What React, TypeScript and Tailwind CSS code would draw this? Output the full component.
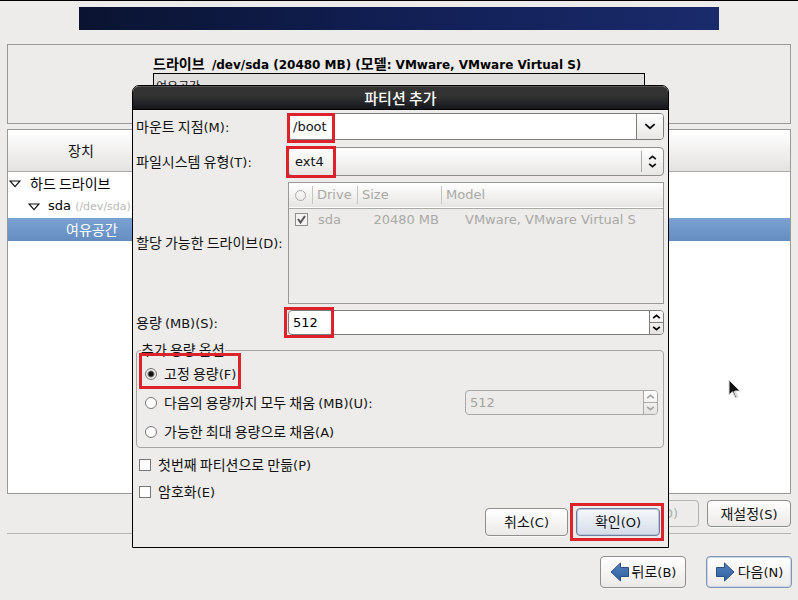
import React, { useState } from "react";
import type { ReactNode } from "react";

const button =
  "flex items-center justify-center rounded-[4px] border border-[#8f8f8c] bg-linear-to-b from-white to-[#eceae8] shadow-[0_1px_0_#f8f8f7]";

/* Korean text followed by its Latin part, such as a keyboard mnemonic. */
function Mixed({ ko, en }: { ko: string; en?: string }) {
  return (
    <span className="whitespace-pre">
      <span className="font-['Noto_Sans_CJK_KR',sans-serif] text-[14px] leading-[20px]">{ko}</span>
      {en}
    </span>
  );
}

function Chevron({ up = false, large = false }: { up?: boolean; large?: boolean }) {
  return (
    <svg width={large ? 12 : 9} height={large ? 7 : 5} viewBox="0 0 10 6" fill="none" stroke="currentColor" strokeWidth={large ? 1.6 : 2} aria-hidden="true">
      <path d={up ? "M1 5 5 1.5 9 5" : "M1 1 5 4.5 9 1"} />
    </svg>
  );
}

function Expander() {
  return (
    <svg width="12" height="8" viewBox="0 0 12 8" fill="white" stroke="#111" strokeWidth="1.2" aria-hidden="true">
      <path d="M1 1h10L6 6.6Z" />
    </svg>
  );
}

function Arrow({ right = false }: { right?: boolean }) {
  return (
    <svg width="20" height="20" viewBox="0 0 20 20" aria-hidden="true" className={right ? "-scale-x-100" : ""}>
      <defs>
        <linearGradient id={right ? "next" : "back"} x1="0" y1="0" x2="0" y2="1">
          <stop offset="0" stopColor="#5583bd" />
          <stop offset="1" stopColor="#2f5f9f" />
        </linearGradient>
      </defs>
      <path
        d="M1 10 10.5 1v4.500H18.500v9H10.500V19Z"
        fill={right ? "url(#next)" : "url(#back)"}
        stroke="#294f82"
        strokeLinejoin="round"
      />
    </svg>
  );
}

function Highlight({ className }: { className: string }) {
  return <span className={`pointer-events-none absolute border-3 border-[#dc232c] ${className}`} />;
}

function Spin({ id, label, value, onChange, disabled = false }: { id: string; label?: string; value: string; onChange?: (v: string) => void; disabled?: boolean }) {
  const line = disabled ? "border-[#a9a9a6]" : "border-[#7c7c79]";
  return (
    <div className={`flex h-[25px] w-full overflow-hidden rounded-[4px] border ${line} ${disabled ? "bg-[#ecebe9] text-[#a4a4a1]" : "bg-white text-black"}`}>
      <input
        id={id}
        aria-label={label}
        value={value}
        disabled={disabled}
        onChange={(e) => onChange?.(e.target.value)}
        className="w-0 min-w-0 grow bg-transparent px-1 outline-none"
      />
      <div className={`flex w-[14px] flex-col border-l ${line} bg-linear-to-b from-white to-[#e4e3e1]`}>
        <button disabled={disabled} aria-label="증가" className={`flex grow items-center justify-center border-b ${line}`}>
          <Chevron up />
        </button>
        <button disabled={disabled} aria-label="감소" className="flex grow items-center justify-center">
          <Chevron />
        </button>
      </div>
    </div>
  );
}

function Radio({ id, checked, onSelect, children }: { id: string; checked: boolean; onSelect: () => void; children: ReactNode }) {
  return (
    <label htmlFor={id} className="flex items-center gap-[7px]">
      <input
        id={id}
        type="radio"
        name="extra-size"
        checked={checked}
        onChange={onSelect}
        className="size-3 appearance-none rounded-full border border-[#777] bg-white checked:bg-[radial-gradient(circle,#111_0_2px,#eee_4px)]"
      />
      {children}
    </label>
  );
}

function Check({ id, children }: { id: string; children: ReactNode }) {
  return (
    <label htmlFor={id} className="flex h-[27px] items-center gap-[7px] pl-[3px]">
      <input id={id} type="checkbox" className="size-3 appearance-none border border-[#777] bg-white checked:bg-[#555]" />
      {children}
    </label>
  );
}

function AddPartition() {
  const [mount, setMount] = useState("/boot");
  const [size, setSize] = useState("512");
  const [mode, setMode] = useState("fixed");
  return (
    <div role="dialog" aria-labelledby="dialog-title" className="absolute top-[84px] right-[129px] left-[132px] rounded-t-[7px] border border-black bg-[#edecea]">
      <h1 id="dialog-title" className="flex h-6 items-center justify-center rounded-t-[6px] border-t border-b border-t-[#555] border-b-black bg-linear-to-b from-[#333] from-40% to-[#14171b] font-['Noto_Sans_CJK_KR',sans-serif] text-[15px] leading-[20px] font-medium text-white">
        파티션 추가
      </h1>
      <div className="pt-[3px] pr-1 pb-[11px] pl-[3px]">
        <div className="grid grid-cols-[152px_1fr] items-center">
          <label htmlFor="mount"><Mixed ko="마운트 지점" en="(M):" /></label>
          <div className="relative flex h-[27px] rounded-[4px] border border-[#7c7c79] bg-white">
            <input id="mount" value={mount} onChange={(e) => setMount(e.target.value)} className="w-0 min-w-0 grow bg-transparent px-1 outline-none" />
            <button aria-label="목록 열기" className="flex w-[27px] items-center justify-center rounded-r-[3px] border-l border-[#7c7c79] bg-linear-to-b from-white to-[#e8e7e5]">
              <Chevron large />
            </button>
            <Highlight className="-top-px -left-[2px] h-[30px] w-12" />
          </div>

          <label htmlFor="fs" className="mt-[7px]"><Mixed ko="파일시스템 유형" en="(T):" /></label>
          <div className="relative mt-[7px]">
            <select id="fs" className="block h-[29px] w-full appearance-none rounded-[4px] border border-[#8f8f8c] bg-linear-to-b from-white to-[#e8e7e5] px-[6px] outline-none">
              <option>ext4</option>
            </select>
            <span className="pointer-events-none absolute inset-y-1 right-0 flex w-[23px] flex-col items-center justify-center gap-[3px] border-l border-[#aaa] pr-[2px]">
              <Chevron up />
              <Chevron />
            </span>
            <Highlight className="-top-px -left-[2px] h-8 w-[50px]" />
          </div>

          <span id="drives" className="mt-[6px]"><Mixed ko="할당 가능한 드라이브" en="(D):" /></span>
          <div className="mt-[6px] h-[122px] border border-[#999996] text-[#a9a9a6]">
            <table aria-labelledby="drives" className="w-full table-fixed border-collapse text-left">
              <colgroup>
                <col className="w-[24px]" />
                <col className="w-[45px]" />
                <col className="w-[84px]" />
                <col />
              </colgroup>
              <thead>
                <tr className="h-[25px] border-b border-[#a9a9a6] bg-linear-to-b from-white to-[#e6e5e3]">
                  <th className="p-0 font-normal">
                    <div className="flex h-[18px] items-center justify-center border-r border-[#c4c4c1]">
                      <span className="size-[11px] rounded-full border border-[#a9a9a6]" />
                    </div>
                  </th>
                  <th className="p-0 font-normal"><div className="h-[18px] border-r border-[#c4c4c1] pl-1 leading-[18px]">Drive</div></th>
                  <th className="p-0 font-normal"><div className="h-[18px] border-r border-[#c4c4c1] pl-1 leading-[18px]">Size</div></th>
                  <th className="p-0 pl-1 font-normal">Model</th>
                </tr>
              </thead>
              <tbody>
                <tr className="h-[23px]">
                  <td className="p-0">
                    <span className="relative ml-[6px] block size-[13px]">
                      <input type="checkbox" aria-label="sda" defaultChecked disabled className="block size-[13px] appearance-none border border-[#8f8f8c] bg-[#f4f3f2]" />
                      <svg className="pointer-events-none absolute inset-0" width="13" height="13" viewBox="0 0 13 13" fill="none" stroke="#555" strokeWidth="2" aria-hidden="true">
                        <path d="m3 6 2.500 3.500L10 3" />
                      </svg>
                    </span>
                  </td>
                  <td className="p-0 pl-[5px]">sda</td>
                  <td className="p-0 pr-[3px] text-right whitespace-nowrap">20480 MB</td>
                  <td className="p-0 pl-[23px] whitespace-nowrap">VMware, VMware Virtual S</td>
                </tr>
              </tbody>
            </table>
          </div>

          <label htmlFor="size" className="mt-[6px]"><Mixed ko="용량 " en="(MB)(S):" /></label>
          <div className="relative mt-[6px]">
            <Spin id="size" value={size} onChange={setSize} />
            <Highlight className="-top-[3px] -left-1 h-[31px] w-[50px]" />
          </div>
        </div>

        <fieldset className="mt-[7px] rounded-[4px] border border-[#a5a5a2] py-px pr-[5px] pl-2">
          <legend className="-ml-1 h-4 font-['Noto_Sans_CJK_KR',sans-serif] text-[14px] leading-[14px]">추가 용량 옵션</legend>
          <div className="relative flex h-[29px] items-center">
            <Radio id="fixed" checked={mode === "fixed"} onSelect={() => setMode("fixed")}><Mixed ko="고정 용량" en="(F)" /></Radio>
            <Highlight className="-top-[6px] -left-[6px] h-9 w-[102px]" />
          </div>
          <div className="flex h-[29px] items-center justify-between">
            <Radio id="upto" checked={mode === "upto"} onSelect={() => setMode("upto")}><Mixed ko="다음의 용량까지 모두 채움 " en="(MB)(U):" /></Radio>
            <div className="w-[193px]"><Spin id="upto-size" label="용량 (MB)" value="512" disabled /></div>
          </div>
          <div className="flex h-[29px] items-center">
            <Radio id="max" checked={mode === "max"} onSelect={() => setMode("max")}><Mixed ko="가능한 최대 용량으로 채움" en="(A)" /></Radio>
          </div>
        </fieldset>

        <div className="mt-[3px]">
          <Check id="primary"><Mixed ko="첫번째 파티션으로 만듦" en="(P)" /></Check>
          <Check id="encrypt"><Mixed ko="암호화" en="(E)" /></Check>
        </div>

        <div className="mt-[3px] flex justify-end gap-2 pr-1">
          <button className={`h-7 w-[83px] ${button}`}><Mixed ko="취소" en="(C)" /></button>
          <div className="relative">
            <button className="flex h-7 w-[84px] items-center justify-center rounded-[4px] border border-[#6c7f9f] bg-linear-to-b from-[#f6f8fb] to-[#d5dde8] shadow-[inset_0_0_0_1px_#b9c8dc]">
              <Mixed ko="확인" en="(O)" />
            </button>
            <Highlight className="-top-[5px] -left-[6px] h-[38px] w-[94px]" />
          </div>
        </div>
      </div>
    </div>
  );
}

export default function App() {
  return (
    <div className="relative flex min-h-screen flex-col border-t border-black bg-[#edecea] pt-[6px] pb-3 font-['DejaVu_Sans','Noto_Sans_CJK_KR',sans-serif] text-[13px] leading-[20px] text-[#111]">
      <div className="mx-[79px] h-[23px] bg-linear-to-r from-[#0a1330] via-[#111f54] to-[#1a2b6c]" />

      <main className="mx-[7px] mt-[14px] flex grow flex-col">
        <section className="flex h-20 justify-center overflow-hidden border border-[#999996] px-[145px] pt-2">
          <div className="w-full">
            <h2 className="h-5 text-[12px] font-bold whitespace-pre text-black">
              <Mixed ko="드라이브 " en=" /dev/sda (20480 MB) (" />
              <Mixed ko="모델" en=": VMware, VMware Virtual S)" />
            </h2>
            <div className="h-10 border border-black bg-[#e0dfde] px-[2px] pt-[2px] font-['Noto_Sans_CJK_KR',sans-serif] text-[12px]">여유공간</div>
          </div>
        </section>

        <section className="mt-[5px] grow border border-[#999996] bg-white">
          <div className="flex h-[42px] items-center border-b border-[#a9a9a6] bg-linear-to-b from-white to-[#e4e3e1]">
            <div className="w-[146px] text-center"><Mixed ko="장치" /></div>
          </div>
          <ul role="tree" className="text-black">
            <li role="treeitem" className="flex h-[23px] items-center gap-[9px] pl-px">
              <Expander /><Mixed ko="하드 드라이브" />
            </li>
            <li role="treeitem" className="flex h-[23px] items-center gap-2 pl-5">
              <Expander />
              <span>sda <span className="text-[11px] text-[#b8b8b8]">(/dev/sda)</span></span>
            </li>
            <li role="treeitem" aria-selected="true" className="flex h-[23px] items-center bg-linear-to-b from-[#7ba2d3] to-[#668dc0] pl-[58px] text-white">
              <Mixed ko="여유공간" />
            </li>
          </ul>
        </section>

        <div className="mt-[6px] flex justify-end gap-2">
          <button disabled className="flex h-[27px] w-[83px] items-center justify-end rounded-[4px] border border-[#b5b5b2] pr-5 text-[#b0b0ad]">
            (D)
          </button>
          <button className={`h-[27px] w-[84px] ${button}`}><Mixed ko="재설정" en="(S)" /></button>
        </div>
        <hr className="mt-[6px] border-[#b5b5b2]" />
      </main>

      <footer className="mt-[22px] flex justify-end gap-5 pr-[6px]">
        <button className={`h-8 w-[86px] gap-[2px] ${button}`}><Arrow /><Mixed ko="뒤로" en="(B)" /></button>
        <button className="flex h-8 w-[86px] items-center justify-center gap-[3px] rounded-[4px] border border-[#8195b3] bg-linear-to-b from-white to-[#eceae8] shadow-[inset_0_0_0_1px_#c9d6e6]">
          <Arrow right /><Mixed ko="다음" en="(N)" />
        </button>
      </footer>

      <AddPartition />

      <svg className="pointer-events-none absolute top-[378px] left-[728px]" width="14" height="20" viewBox="0 0 14 20" aria-hidden="true">
        <path d="M1 1v15l3.500-3.300L7.500 19l2.300-1.100L7 12h5Z" fill="#111" stroke="#ddd" />
        <path d="m5.500 12.500 2.500 5.700 1.600-.8L7 12Z" fill="#ddd" />
      </svg>
    </div>
  );
}
